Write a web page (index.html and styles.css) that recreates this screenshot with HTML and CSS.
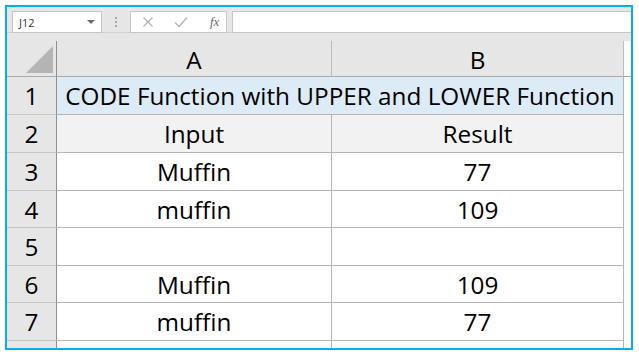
FILE: index.html
```html
<!DOCTYPE html>
<html lang="en">
<head>
    <meta charset="UTF-8">
    <title>CODE Function with UPPER and LOWER Function</title>
    <link rel="stylesheet" href="styles.css">
</head>
<body>
<div class="frame">
    <!-- formula bar -->
    <div class="toolbar">
        <div class="name-box">
            <span>J12</span>
            <span class="caret"></span>
        </div>
        <div class="grip"><i></i><i></i><i></i></div>
        <div class="fx-box">
            <svg class="ico" width="12" height="12" viewBox="0 0 12 12">
                <path d="M1.5 1.5 L10.5 10.5 M10.5 1.5 L1.5 10.5" stroke="#b3b3b3" stroke-width="1.3" fill="none"/>
            </svg>
            <svg class="ico" width="14" height="12" viewBox="0 0 14 12">
                <path d="M1 6.5 L5 10.5 L13 1.5" stroke="#b3b3b3" stroke-width="1.4" fill="none"/>
            </svg>
            <span class="fx">fx</span>
        </div>
        <div class="formula"></div>
    </div>

    <!-- sheet -->
    <div class="sheet">
        <div class="row head">
            <div class="corner"><span class="tri"></span></div>
            <div class="col-h">A</div>
            <div class="col-h">B</div>
            <div class="edge"></div>
        </div>
        <div class="row title">
            <div class="num">1</div>
            <div class="cell merged">CODE Function with UPPER and LOWER Function</div>
            <div class="edge"></div>
        </div>
        <div class="row sub">
            <div class="num">2</div>
            <div class="cell">Input</div>
            <div class="cell">Result</div>
            <div class="edge"></div>
        </div>
        <div class="row">
            <div class="num">3</div>
            <div class="cell">Muffin</div>
            <div class="cell">77</div>
            <div class="edge"></div>
        </div>
        <div class="row short">
            <div class="num">4</div>
            <div class="cell">muffin</div>
            <div class="cell">109</div>
            <div class="edge"></div>
        </div>
        <div class="row">
            <div class="num">5</div>
            <div class="cell"></div>
            <div class="cell"></div>
            <div class="edge"></div>
        </div>
        <div class="row short">
            <div class="num">6</div>
            <div class="cell">Muffin</div>
            <div class="cell">109</div>
            <div class="edge"></div>
        </div>
        <div class="row">
            <div class="num">7</div>
            <div class="cell">muffin</div>
            <div class="cell">77</div>
            <div class="edge"></div>
        </div>
        <div class="row tail">
            <div class="num"></div>
            <div class="cell"></div>
            <div class="cell"></div>
            <div class="edge"></div>
        </div>
    </div>
</div>
</body>
</html>
```

FILE: styles.css
```css
body {
    margin: 0;
    background: #fff;
    font-family: "Open Sans", "Liberation Sans", sans-serif;
    color: #000;
}
.frame {
    margin: 5px 0 0 5px;
    width: 624px;
    height: 341px;
    border: 2px solid #00b0f0;
    background: #e6e6e6;
    overflow: hidden;
}

/* formula bar */
.toolbar {
    display: flex;
    align-items: flex-start;
    height: 26px;
    padding: 4px 0 0 5px;
    box-sizing: border-box;
    background: #e6e6e6;
    border-bottom: 1px solid #d0d0d0;
}
.name-box {
    width: 90px;
    height: 22px;
    box-sizing: border-box;
    border: 1px solid #c6c6c6;
    background: #fff;
    display: flex;
    align-items: center;
    justify-content: space-between;
    padding: 0 6px 0 6px;
    font-size: 11px;
    color: #333;
}
.caret {
    width: 0;
    height: 0;
    border-left: 4px solid transparent;
    border-right: 4px solid transparent;
    border-top: 4px solid #6d6d6d;
}
.grip {
    display: flex;
    flex-direction: column;
    gap: 2px;
    margin: 6px 0 0 13px;
}
.grip i {
    display: block;
    width: 2px;
    height: 2px;
    background: #a6a6a6;
}
.fx-box {
    margin-left: 13px;
    width: 97px;
    height: 22px;
    box-sizing: border-box;
    border: 1px solid #c6c6c6;
    background: #fff;
    display: flex;
    align-items: center;
    padding-left: 11px;
}
.ico {
    margin-right: 20px;
}
.fx {
    font-family: "Liberation Serif", serif;
    font-style: italic;
    font-size: 13px;
    color: #6a6a6a;
    margin-left: 2px;
}
.formula {
    margin-left: 5px;
    flex: 1;
    height: 22px;
    box-sizing: border-box;
    border: 1px solid #c6c6c6;
    border-right: none;
    background: #fff;
}

/* sheet */
.sheet {
    padding-top: 8px;
}
.row {
    display: grid;
    grid-template-columns: 50px 275px 292px 1fr;
    height: 38px;
    font-size: 24.3px;
}
.row.short {
    height: 37px;
}
.row.head {
    height: 36px;
}
.row > div {
    display: flex;
    align-items: center;
    justify-content: center;
    box-sizing: border-box;
}
.corner {
    border-right: 1px solid #8f8f8f;
    border-bottom: 1px solid #ababab;
    align-items: flex-end !important;
    justify-content: flex-end !important;
    padding: 0 3px 3px 0;
}
.tri {
    width: 0;
    height: 0;
    border-left: 27px solid transparent;
    border-bottom: 27px solid #b4b4b4;
}
.col-h {
    border-right: 1px solid #bcbcbc;
    border-bottom: 1px solid #ababab;
    padding-top: 2px;
}
.head .edge {
    border-bottom: 1px solid #ababab;
}
.num {
    background: #e6e6e6;
    border-right: 1px solid #8f8f8f;
    border-bottom: 1px solid #c6c6c6;
}
.cell {
    background: #fff;
    border-right: 1px solid #b4b4b4;
    border-bottom: 1px solid #b4b4b4;
}
.edge {
    background: #fff;
}
.title .merged {
    grid-column: 2 / 4;
    background: #ddebf7;
}
.sub .cell {
    background: #f2f2f2;
}
.tail .num {
    border-bottom: none;
}
.tail .cell {
    border-bottom: none;
}
```
